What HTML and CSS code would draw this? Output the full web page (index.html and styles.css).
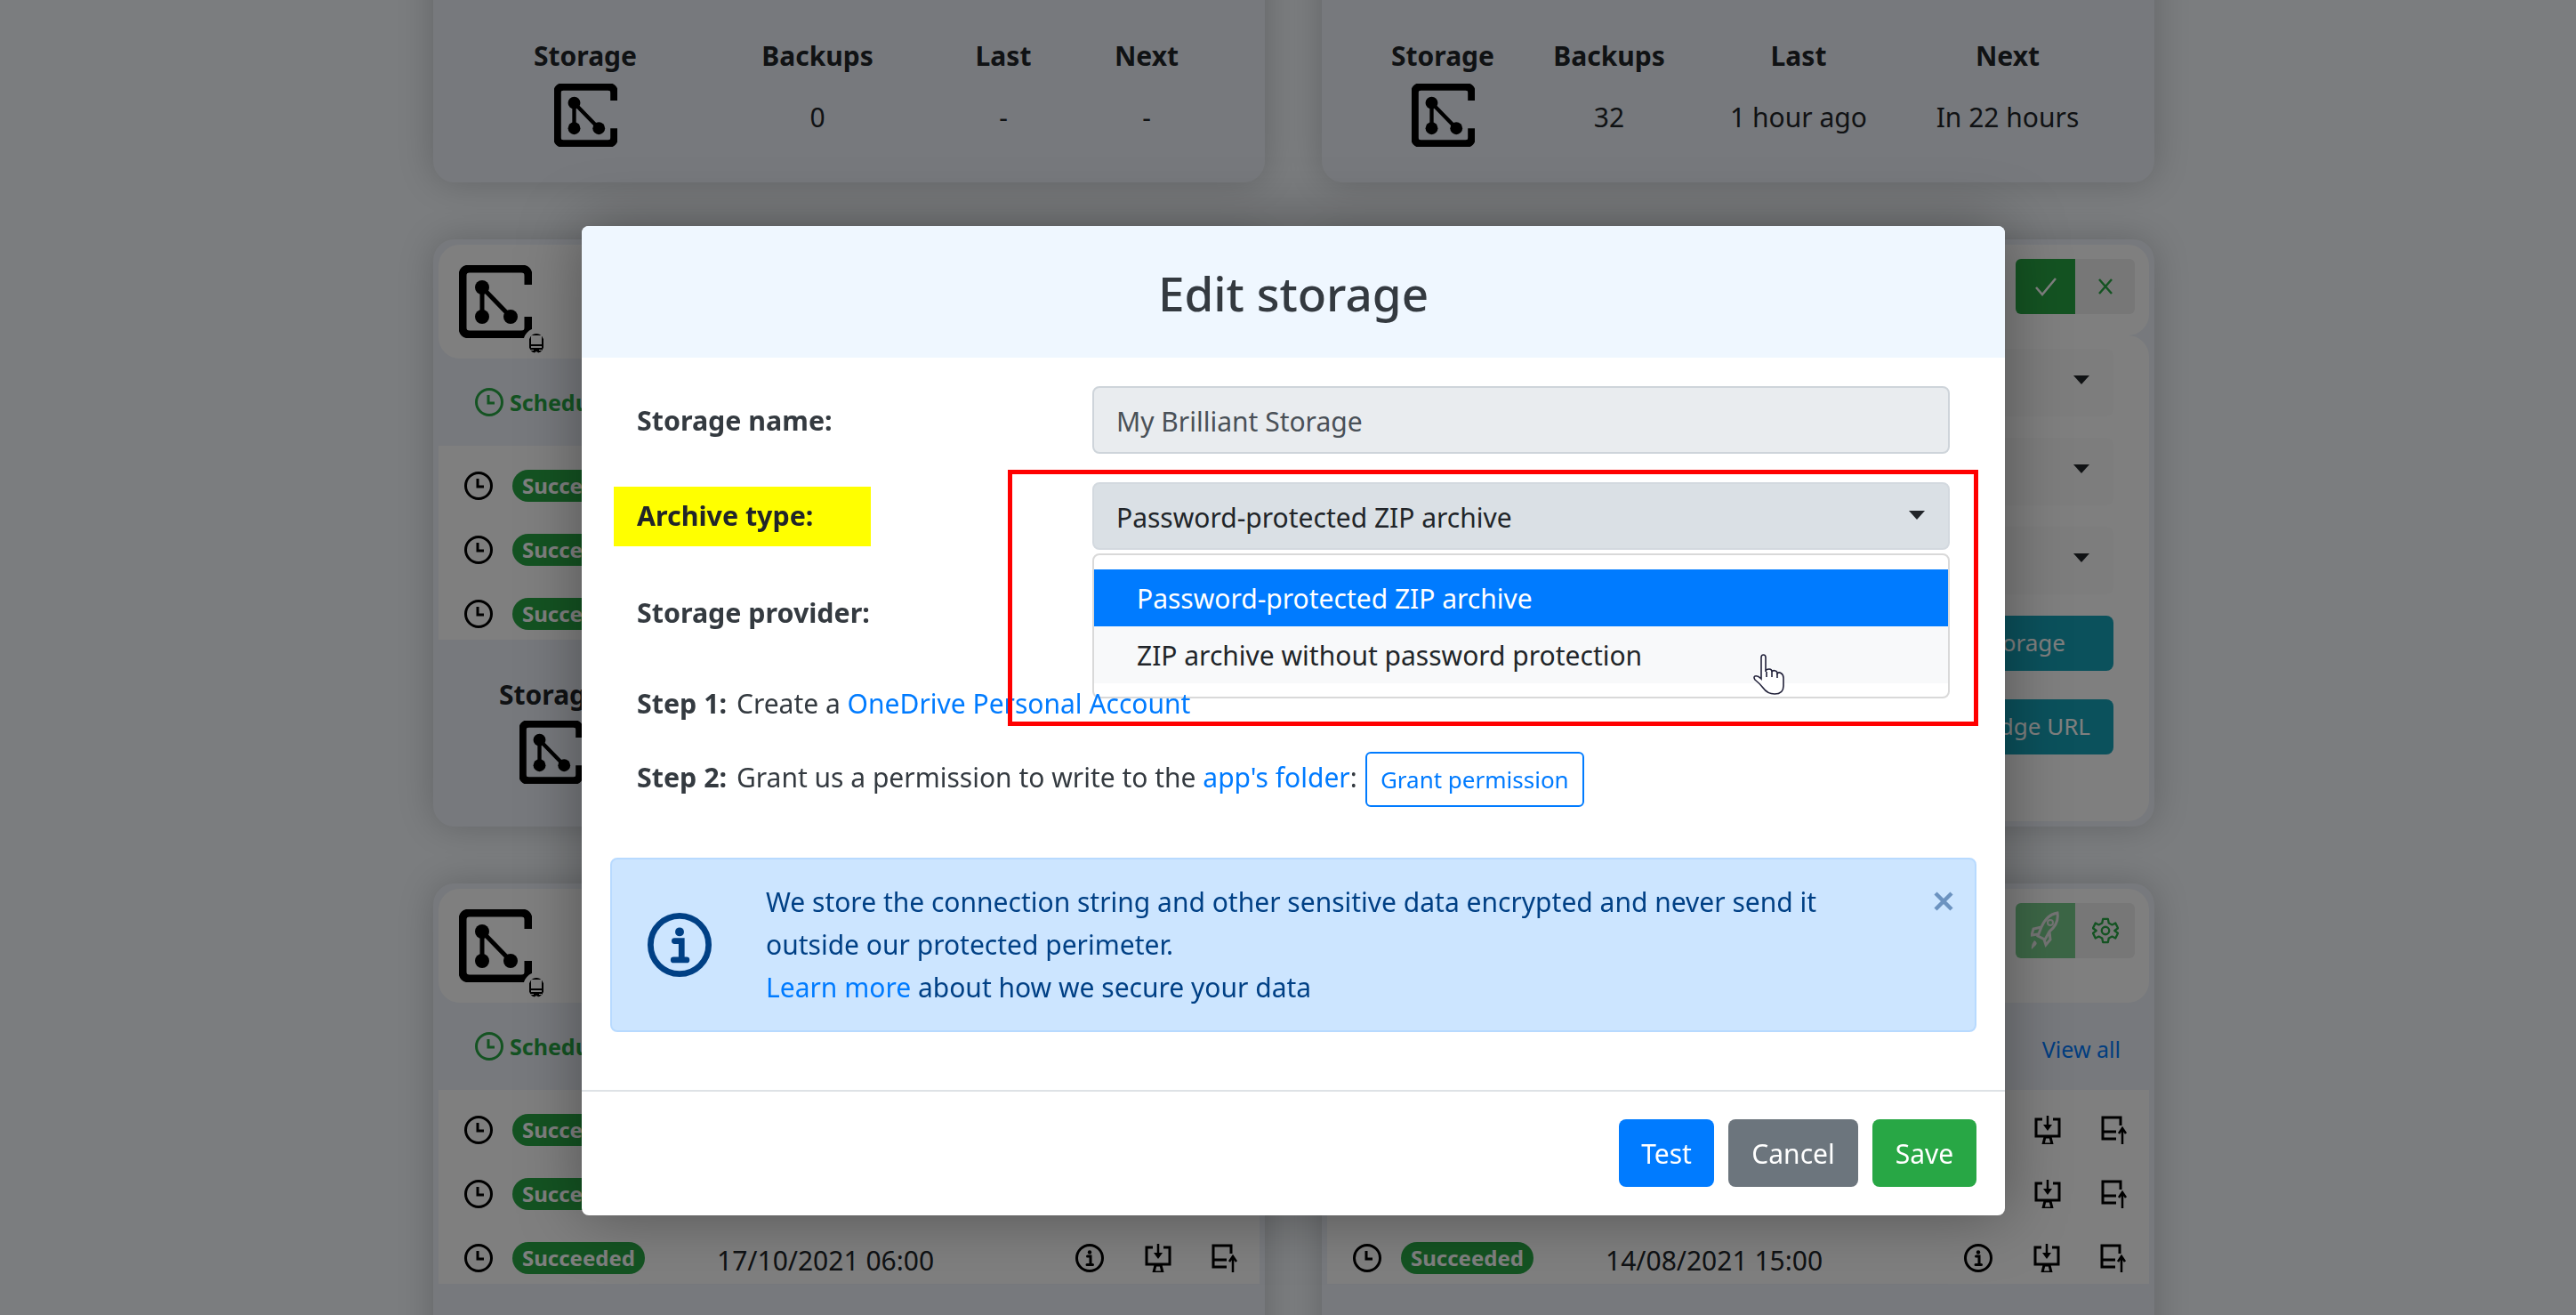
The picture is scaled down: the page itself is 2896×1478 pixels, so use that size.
FILE: index.html
```html
<!DOCTYPE html>
<html lang="en">
<head>
	<meta charset="UTF-8">
	<title>Edit storage</title>
	<link rel="stylesheet" href="styles.css">
</head>
<body>
	<svg class="defs" width="0" height="0">
		<symbol id="logo" viewBox="0 0 82 82">
			<path d="M78 22V12Q78 4 70 4H12Q4 4 4 12V70Q4 78 12 78H70Q78 78 78 70V58" fill="none" stroke="#000"/>
			<path d="M26 25V58M26 25L58 58" fill="none" stroke="#000" stroke-width="5"/>
			<circle cx="26" cy="25" r="8"/><circle cx="26" cy="58" r="8"/><circle cx="58" cy="58" r="8"/>
		</symbol>
		<symbol id="book" viewBox="0 0 18 22">
			<path d="M2 17V3Q2 1 4 1H16V17H4Q1 17 1 19Q1 20 3 20H6M12 20H16V17M2 13H16" fill="none" stroke="#000" stroke-width="2"/>
			<path d="M6 17H12V22L9 20L6 22Z"/>
		</symbol>
		<symbol id="clock" viewBox="0 0 32 32">
			<circle cx="16" cy="16" r="14.5" fill="none" stroke="currentColor" stroke-width="3"/>
			<path d="M15 8V17H22" fill="none" stroke="currentColor" stroke-width="3"/>
		</symbol>
		<symbol id="info" viewBox="0 0 32 32">
			<circle cx="16" cy="16" r="14.5" fill="none" stroke="currentColor" stroke-width="3"/>
			<circle cx="16" cy="9.500" r="2.200" fill="currentColor"/>
			<path d="M13.500 14H17V23M13 23.500H19.500" fill="none" stroke="currentColor" stroke-width="3" stroke-linecap="round"/>
		</symbol>
		<symbol id="restore" viewBox="0 0 32 32">
			<path d="M10 4H3V23H29V4H22M11 32H21L19 24H13Z" fill="none" stroke="#000" stroke-width="3"/>
			<path d="M16 0V12" stroke="#000" stroke-width="2.500"/>
			<path d="M11 10H21L16 17Z"/>
		</symbol>
		<symbol id="export" viewBox="0 0 32 32">
			<path d="M22 11V2H2V26H17M2 18H17" fill="none" stroke="#000" stroke-width="3"/>
			<path d="M24 32V14M20 20L24 14L28 20" fill="none" stroke="#000" stroke-width="2.500"/>
		</symbol>
		<symbol id="rocket" viewBox="0 0 34 44">
			<path d="M30 2Q18 4 12 18L8 28L16 32L21 23Q32 14 30 2ZM12 18L3 20L1 27L8 26M21 23L22 32L17 38L15 32" fill="none" stroke="currentColor" stroke-width="3"/>
			<path d="M4 33Q8 35 6 38L1 43Q0 38 4 33Z" fill="currentColor"/>
			<circle cx="22" cy="13" r="3" fill="none" stroke="currentColor" stroke-width="2"/>
		</symbol>
		<symbol id="gear" viewBox="0 0 32 32">
			<path d="M13 2H19L20 7L24 9L28 7L31 13L27 16L31 19L28 25L24 23L20 25L19 30H13L12 25L8 23L4 25L1 19L5 16L1 13L4 7L8 9L12 7Z" fill="none" stroke="currentColor" stroke-width="2.500" stroke-linejoin="round"/>
			<circle cx="16" cy="16" r="4.500" fill="none" stroke="currentColor" stroke-width="2.500"/>
		</symbol>
	</svg>

	<div class="page">
		<div class="col">
			<section class="card card-top">
				<div class="stats stats-a">
					<b>Storage</b><b>Backups</b><b>Last</b><b>Next</b>
					<svg class="logo-sm"><use href="#logo"/></svg><span>0</span><span>-</span><span>-</span>
				</div>
			</section>
			<section class="card">
				<div class="head">
					<div class="logo-wrap">
						<svg class="logo"><use href="#logo"/></svg>
						<svg class="book"><use href="#book"/></svg>
					</div>
				</div>
				<div class="sched"><svg class="ico"><use href="#clock"/></svg><b>Scheduled</b></div>
				<div class="runs">
					<div class="run"><svg class="ico"><use href="#clock"/></svg><span class="badge">Succeeded</span></div>
					<div class="run"><svg class="ico"><use href="#clock"/></svg><span class="badge">Succeeded</span></div>
					<div class="run"><svg class="ico"><use href="#clock"/></svg><span class="badge">Succeeded</span></div>
				</div>
				<div class="stats stats-c">
					<b>Storage</b>
					<svg class="logo-sm"><use href="#logo"/></svg>
				</div>
			</section>
			<section class="card">
				<div class="head">
					<div class="logo-wrap">
						<svg class="logo"><use href="#logo"/></svg>
						<svg class="book"><use href="#book"/></svg>
					</div>
				</div>
				<div class="sched"><svg class="ico"><use href="#clock"/></svg><b>Scheduled</b></div>
				<div class="runs">
					<div class="run"><svg class="ico"><use href="#clock"/></svg><span class="badge">Succeeded</span></div>
					<div class="run"><svg class="ico"><use href="#clock"/></svg><span class="badge">Succeeded</span></div>
					<div class="run"><svg class="ico"><use href="#clock"/></svg><span class="badge">Succeeded</span><span class="date">17/10/2021 06:00</span><svg class="ico act"><use href="#info"/></svg><svg class="ico act"><use href="#restore"/></svg><svg class="ico act"><use href="#export"/></svg></div>
				</div>
			</section>
		</div>
		<div class="col">
			<section class="card card-top">
				<div class="stats stats-b">
					<b>Storage</b><b>Backups</b><b>Last</b><b>Next</b>
					<svg class="logo-sm"><use href="#logo"/></svg><span>32</span><span>1 hour ago</span><span>In 22 hours</span>
				</div>
			</section>
			<section class="card">
				<div class="head head-right head-short">
					<div class="btn-group">
						<span class="tool tool-ok"><svg width="26" height="22" viewBox="0 0 26 22"><path d="M2 12L9 20L24 2" fill="none" stroke="currentColor" stroke-width="2.500"/></svg></span>
						<span class="tool"><svg width="20" height="22" viewBox="0 0 20 22"><path d="M3 3L17 19M17 3L3 19" fill="none" stroke="currentColor" stroke-width="2.500"/></svg></span>
					</div>
				</div>
				<div class="panel">
					<div class="fake-select"><i class="caret"></i></div>
					<div class="fake-select"><i class="caret"></i></div>
					<div class="fake-select"><i class="caret"></i></div>
					<div class="teal teal-wide">Add storage</div>
					<div class="teal">Get badge URL</div>
				</div>
			</section>
			<section class="card">
				<div class="head head-right">
					<div class="btn-group">
						<span class="tool tool-go"><svg width="34" height="44" class="rocket"><use href="#rocket"/></svg></span>
						<span class="tool"><svg width="30" height="30"><use href="#gear"/></svg></span>
					</div>
				</div>
				<div class="sched sched-right"><a class="view">View all</a></div>
				<div class="runs">
					<div class="run run-end"><svg class="ico act"><use href="#restore"/></svg><svg class="ico act"><use href="#export"/></svg></div>
					<div class="run run-end"><svg class="ico act"><use href="#restore"/></svg><svg class="ico act"><use href="#export"/></svg></div>
					<div class="run"><svg class="ico"><use href="#clock"/></svg><span class="badge">Succeeded</span><span class="date">14/08/2021 15:00</span><svg class="ico act"><use href="#info"/></svg><svg class="ico act"><use href="#restore"/></svg><svg class="ico act"><use href="#export"/></svg></div>
				</div>
			</section>
		</div>
	</div>

	<div class="backdrop"></div>

	<div class="modal">
		<h1 class="modal-title">Edit storage</h1>
		<div class="modal-body">
			<div class="field">
				<b>Storage name:</b>
				<div class="control control-off">My Brilliant Storage</div>
			</div>
			<div class="field">
				<b class="mark">Archive type:</b>
				<div class="control control-open">Password-protected ZIP archive<i class="caret"></i></div>
			</div>
			<div class="field">
				<b>Storage provider:</b>
				<div class="control"></div>
			</div>
			<div class="step step-first"><p><b>Step 1:</b> Create a <a>OneDrive Personal Account</a></p></div>
			<div class="step"><p><b>Step 2:</b> Grant us a permission to write to the <a>app's folder</a>:</p><button class="btn-outline">Grant permission</button></div>
			<div class="alert">
				<svg class="alert-ico"><use href="#info"/></svg>
				<div class="alert-text">
					We store the connection string and other sensitive data encrypted and never send it<br>
					outside our protected perimeter.<br>
					<a>Learn more</a> about how we secure your data
				</div>
				<svg class="alert-close" width="24" height="22" viewBox="0 0 24 22"><path d="M3 2L21 20M21 2L3 20" fill="none" stroke="#6c93c0" stroke-width="4.500"/></svg>
			</div>
		</div>
		<div class="modal-foot">
			<button class="btn btn-blue">Test</button>
			<button class="btn btn-grey">Cancel</button>
			<button class="btn btn-green">Save</button>
		</div>

		<ul class="menu">
			<li class="on">Password-protected ZIP archive</li>
			<li class="hover">ZIP archive without password protection</li>
		</ul>
		<div class="redbox"></div>
		<svg class="hand" width="35" height="46" viewBox="0 0 35 46">
			<path d="M9 4Q9 1 11.500 1Q14 1 14 4V20Q14 17 18 17Q21 17 21 20Q22 18 25 19Q27 19.500 27 22Q29 20 31 21.500Q34 23 34 27V36Q34 45 24 45Q16 45 11 38Q7 33 2 29Q0 26 2 25Q5 24 9 28Z" fill="#fff" stroke="#22223a" stroke-width="1.600"/>
			<path d="M15 20V26M21 20V26M27 22V27" stroke="#22223a" stroke-width="1.600"/>
		</svg>
	</div>
</body>
</html>
```

FILE: styles.css
```css
*{
	box-sizing:border-box;
}
html,body{
	margin:0;
	height:100%;
	overflow:hidden;
}
body{
	background:#f6fafe;
	font-family:"Noto Sans","Liberation Sans",sans-serif;
	font-size:30px;
	color:#212529;
}
a{
	color:#007bff;
}
.defs{
	position:absolute;
}

/* page behind the dialog */
.page{
	display:grid;
	grid-template-columns:935px 936px;
	gap:64px;
	padding-left:487px;
	margin-top:-455px;
}
.col{
	display:flex;
	flex-direction:column;
	gap:64px;
}
.card{
	background:#eff3fa;
	border-radius:24px;
	padding:6px;
	box-shadow:0 0 40px rgba(0,0,0,.2);
	height:660px;
}
.card-top{
	display:flex;
	flex-direction:column;
	justify-content:flex-end;
	padding:0 0 29px 31px;
}
.stats{
	display:grid;
	text-align:center;
	align-items:center;
	justify-items:center;
	grid-template-rows:48px 90px;
}
.stats b{
	font-weight:700;
	color:#212529;
}
.stats-a{grid-template-columns:280px 242px 176px 146px;}
.stats-b{grid-template-columns:210px 164px 262px 208px;}
.stats-c{
	grid-template-columns:202px;
	grid-template-rows:42px 92px;
	padding:40px 0 0 25px;
}
.logo-sm{
	width:71px;
	height:71px;
	margin-top:-3px;
	stroke-width:10;
}
.head{
	height:128px;
	background:#fff;
	border-radius:24px;
	display:flex;
	align-items:center;
	padding-left:23px;
}
.head-right{
	justify-content:flex-end;
	align-items:flex-start;
	padding:16px 16px 0 0;
}
.head-short{
	height:102px;
}
.logo-wrap{
	display:flex;
	align-items:flex-end;
}
.logo{
	width:82px;
	height:82px;
	stroke-width:9;
}
.book{
	width:30px;
	height:34px;
	padding:6px;
	margin:0 -6px -23px -10px;
	background:#fff;
	border-radius:50%;
}
.sched{
	height:98px;
	display:flex;
	align-items:center;
	gap:7px;
	padding-left:41px;
	color:#28a745;
	font-size:25px;
}
.sched .ico{
	color:#28a745;
}
.sched-right{
	justify-content:flex-end;
	padding:5px 32px 0 0;
}
.view{
	color:#007bff;
	font-size:25px;
}
.ico{
	width:32px;
	height:32px;
	color:#000;
	flex:none;
}
.runs{
	background:#fff;
	height:218px;
	padding-top:9px;
}
.run{
	height:72px;
	display:flex;
	align-items:center;
	padding-left:29px;
}
.run-end{
	justify-content:flex-end;
	padding-right:22px;
}
.badge{
	margin-left:22px;
	width:149px;
	height:36px;
	border-radius:18px;
	background:#28a745;
	color:#fff;
	font-size:24px;
	font-weight:700;
	line-height:35px;
	text-align:center;
	flex:none;
}
.date{
	margin-left:81px;
	padding-top:4px;
	width:403px;
	font-size:30px;
	color:#212529;
	white-space:nowrap;
}
.act{
	margin-right:44.500px;
}
.run .act:last-child{
	margin-right:0;
}

/* right panel of the edit card */
.btn-group{
	display:flex;
	height:62px;
	border-radius:6px;
	overflow:hidden;
}
.tool{
	width:67px;
	display:flex;
	align-items:center;
	justify-content:center;
	background:#eee;
	color:#28a745;
}
.tool-ok{
	background:#28a745;
	color:#fff;
}
.tool-go{
	background:#78cc8c;
	color:#fff;
}
.rocket{
	color:#e8e8e8;
}
.panel{
	height:546px;
	background:#fff;
	border-radius:24px;
	padding:15px 40px 0 0;
	display:flex;
	flex-direction:column;
	align-items:flex-end;
}
.fake-select{
	width:100%;
	height:76px;
	margin-bottom:24px;
	background:#fbfbfb;
	border-radius:8px;
	position:relative;
}
.fake-select .caret{
	right:27px;
}
.teal{
	width:100%;
	height:62px;
	margin-bottom:32px;
	background:#17a2b8;
	color:#fff;
	border-radius:8px;
	text-align:right;
	line-height:60px;
	padding-right:26px;
	font-size:26px;
}
.teal-wide{
	padding-right:54px;
}
.caret{
	position:absolute;
	right:26px;
	top:30px;
	width:0;
	height:0;
	border-left:9px solid transparent;
	border-right:9px solid transparent;
	border-top:10px solid #212529;
}

.backdrop{
	position:fixed;
	inset:0;
	background:rgba(0,0,0,.5);
}

/* dialog */
.modal{
	position:absolute;
	left:654px;
	top:254px;
	width:1600px;
	height:1112px;
	background:#fff;
	border-radius:8px;
	box-shadow:0 0 70px rgba(0,0,0,.35);
	overflow:hidden;
}
.modal-title{
	margin:0;
	height:148px;
	line-height:152px;
	background:#eff7ff;
	text-align:center;
	font-size:53px;
	font-weight:500;
	color:#343a40;
}
.modal-body{
	height:823px;
	padding:32px 32px 0;
}
.field{
	display:grid;
	grid-template-columns:512px 964px;
	align-items:center;
	padding-left:30px;
	margin-bottom:32px;
}
.field b,.step b{
	font-weight:700;
	font-size:30.400px;
	color:#343a40;
}
.step b{
	margin-right:3px;
}
.mark{
	background:#ff0;
	margin-left:-26px;
	padding-left:26px;
	width:289px;
	height:67px;
	line-height:66px;
	color:#212529 !important;
}
.control{
	height:76px;
	border:2px solid #ced4da;
	border-radius:8px;
	line-height:75px;
	padding-left:25px;
	position:relative;
	color:#495057;
}
.control-off{
	background:#e9ecef;
}
.control-open{
	background:#dae0e5;
	border-color:#d3d9df;
	color:#212529;
}
.step{
	display:flex;
	align-items:center;
	padding-left:30px;
	position:relative;
	z-index:2;
	height:62px;
	margin-bottom:57px;
	color:#343a40;
}
.step p{
	margin:-5px 0 0;
	white-space:nowrap;
}
.step-first{
	height:48px;
	margin:41px 0 30px;
}
.step-first p{
	margin-top:-2px;
}
.btn-outline{
	margin-left:9px;
	width:246px;
	height:62px;
	background:#fff;
	color:#007bff;
	border:2px solid #007bff;
	border-radius:6px;
	font:26px "Noto Sans",sans-serif;
	padding:0;
}
.alert{
	position:relative;
	height:196px;
	background:#cce5ff;
	border:2px solid #b8daff;
	border-radius:8px;
	color:#004085;
	display:flex;
	align-items:center;
	padding-left:40px;
	gap:61px;
	line-height:48px;
}
.alert-ico{
	width:72px;
	height:72px;
	color:#004085;
	flex:none;
}
.alert-text{
	white-space:nowrap;
}
.alert-close{
	position:absolute;
	right:23px;
	top:36px;
}
.modal-foot{
	height:141px;
	border-top:2px solid #dee2e6;
	padding:31px 32px 0;
	display:flex;
	justify-content:flex-end;
	gap:16px;
}
.btn{
	height:76px;
	border:0;
	border-radius:8px;
	color:#fff;
	font:30px "Noto Sans",sans-serif;
	padding:0;
}
.btn-blue{background:#007bff;width:107px;}
.btn-grey{background:#6c757d;width:146px;}
.btn-green{background:#28a745;width:117px;}

/* open dropdown, over the form */
.menu{
	position:absolute;
	z-index:1;
	left:574px;
	top:368px;
	width:964px;
	height:163px;
	margin:0;
	padding:16px 0;
	list-style:none;
	background:#fff;
	border:2px solid #d9d9d9;
	border-radius:8px;
}
.menu li{
	height:64px;
	line-height:65px;
	padding-left:48px;
	color:#212529;
}
.menu .on{
	background:#007bff;
	color:#fff;
}
.menu .hover{
	background:#f8f9fa;
}
.redbox{
	position:absolute;
	z-index:3;
	left:479px;
	top:274px;
	width:1091px;
	height:288px;
	border:5px solid #f00;
}
.hand{
	position:absolute;
	z-index:4;
	left:1317px;
	top:481px;
}
```
